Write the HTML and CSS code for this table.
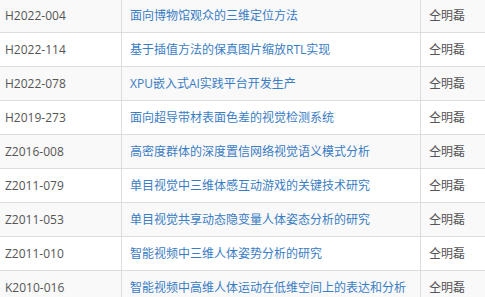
FILE: index.html
```html
<!DOCTYPE html>
<html lang="zh">
<head>
<meta charset="utf-8">
<link rel="stylesheet" href="styles.css">
</head>
<body>
<div class="wrap">
<table class="grid">
<tbody>
<tr><td class="code">H2022-004</td><td class="title"><a href="#">面向博物馆观众的三维定位方法</a></td><td class="who">仝明磊</td></tr>
<tr><td class="code">H2022-114</td><td class="title"><a href="#">基于插值方法的保真图片缩放RTL实现</a></td><td class="who">仝明磊</td></tr>
<tr><td class="code">H2022-078</td><td class="title"><a href="#">XPU嵌入式AI实践平台开发生产</a></td><td class="who">仝明磊</td></tr>
<tr><td class="code">H2019-273</td><td class="title"><a href="#">面向超导带材表面色差的视觉检测系统</a></td><td class="who">仝明磊</td></tr>
<tr><td class="code">Z2016-008</td><td class="title"><a href="#">高密度群体的深度置信网络视觉语义模式分析</a></td><td class="who">仝明磊</td></tr>
<tr><td class="code">Z2011-079</td><td class="title"><a href="#">单目视觉中三维体感互动游戏的关键技术研究</a></td><td class="who">仝明磊</td></tr>
<tr><td class="code">Z2011-053</td><td class="title"><a href="#">单目视觉共享动态隐变量人体姿态分析的研究</a></td><td class="who">仝明磊</td></tr>
<tr><td class="code">Z2011-010</td><td class="title"><a href="#">智能视频中三维人体姿势分析的研究</a></td><td class="who">仝明磊</td></tr>
<tr><td class="code">K2010-016</td><td class="title"><a href="#">智能视频中高维人体运动在低维空间上的表达和分析</a></td><td class="who">仝明磊</td></tr>
</tbody>
</table>
</div>
</body>
</html>
```

FILE: styles.css
```css
html, body {
  margin: 0;
  padding: 0;
  background: #fff;
}
.wrap {
  width: 485px;
  height: 297px;
  overflow: hidden;
}
.grid {
  margin-top: -2px;
  border-collapse: separate;
  border-spacing: 0;
  table-layout: fixed;
  width: 560px;
  font-family: "Open Sans", "Noto Sans CJK SC", sans-serif;
  font-size: 12px;
  line-height: 17px;
  color: #555;
}
.grid td {
  border-top: 1px solid #ddd;
  border-right: 1px solid #ddd;
  padding: 8px;
  white-space: nowrap;
  overflow: hidden;
  vertical-align: top;
}
.grid tr:nth-child(odd) td {
  background: #f9f9f9;
}
.grid .code {
  width: 108px;
  padding-left: 5px;
}
.grid .title {
  width: 282px;
}
.grid .who {
  width: auto;
  border-right: none;
}
.grid a {
  color: #3a7cc4;
  text-decoration: none;
}
```
